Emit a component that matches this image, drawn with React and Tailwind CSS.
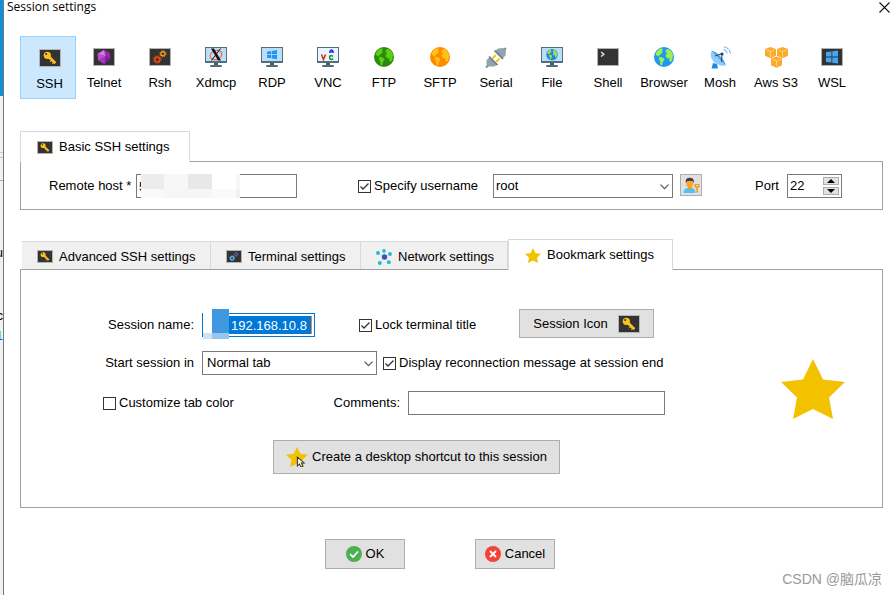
import React from "react";

/* ---------- icons ---------- */

function TermFrame({ width = 22, height = 18, children }) {
  return (
    <svg width={width} height={height} viewBox="1 1 20 16" preserveAspectRatio="none" aria-hidden="true" className="shrink-0 border border-[#b4b4b4] bg-[#333333]">
      {children}
    </svg>
  );
}

function KeyIcon({ width, height }) {
  return (
    <TermFrame width={width} height={height}>
      <path d="M9.5 7.5 L16.300 14.300" stroke="#fbc11c" strokeWidth="3" />
      <path d="M12 12 L10.800 13.200 M14 14 L13 15" stroke="#e0a010" strokeWidth="1" />
      <circle cx="8.300" cy="6.300" r="3.600" fill="#fbc11c" />
      <circle cx="7.200" cy="5" r="1" fill="#333" />
    </TermFrame>
  );
}

function GemIcon() {
  return (
    <TermFrame>
      <path d="M11 2 L16.500 4.500 L17.500 10 L11.500 16 L5.500 12.500 L4.500 6 Z" fill="#9c27b0" />
      <path d="M11 2 L12.500 8 L4.500 6 Z" fill="#d07be4" />
      <path d="M4.500 6 L12.500 8 L5.500 12.500 Z" fill="#b64fd0" />
      <path d="M12.500 8 L17.500 10 L11.500 16 Z" fill="#7b1fa2" />
      <path d="M5.500 12.500 L12.500 8 L11.500 16 Z" fill="#a338bd" />
    </TermFrame>
  );
}

function GearsIcon({ width, height, big, small }) {
  return (
    <TermFrame width={width} height={height}>
      <circle cx="8.300" cy="11.500" r="2.400" fill="none" stroke={big} strokeWidth="1.700" />
      <circle cx="8.300" cy="11.500" r="3.600" fill="none" stroke={big} strokeWidth="1.200" strokeDasharray="1.500 1.330" />
      <circle cx="14" cy="5.800" r="2" fill="none" stroke={small} strokeWidth="1.400" />
      <circle cx="14" cy="5.800" r="3.100" fill="none" stroke={small} strokeWidth="1" strokeDasharray="1.250 1.185" />
    </TermFrame>
  );
}

function Monitor({ children, screen = "#bbdefb" }) {
  return (
    <svg width="22" height="20" viewBox="0 0 22 20" aria-hidden="true" className="shrink-0">
      <rect width="22" height="16" fill="#546e7a" />
      <rect x="1" y="1" width="20" height="13" fill={screen} />
      <rect x="9" y="16" width="4" height="2" fill="#455a64" />
      <rect x="5" y="18" width="12" height="2" rx="1" fill="#546e7a" />
      {children}
    </svg>
  );
}

function XdmcpIcon() {
  return (
    <Monitor>
      <ellipse cx="11" cy="8" rx="6" ry="4.500" fill="none" stroke="#ef6c3a" strokeWidth="1.200" transform="rotate(-20 11 8)" />
      <path d="M6 1.500 H9 L16 13.500 H13 Z" fill="#111" />
      <path d="M15.500 1.500 L6.500 13.500" stroke="#111" strokeWidth="1" />
    </Monitor>
  );
}

function WindowsPanes() {
  return (
    <g fill="#2196f3">
      <path d="M6 4.700 L10.300 4 V7.200 H6 Z" />
      <path d="M11 3.900 L16 3 V7.200 H11 Z" />
      <path d="M6 8 H10.300 V11.300 L6 10.700 Z" />
      <path d="M11 8 H16 V12.200 L11 11.400 Z" />
    </g>
  );
}

function VncIcon() {
  return (
    <Monitor screen="#e8f4ff">
      <path d="M4.500 7.500 L6.500 12.500 L8.500 7.500" fill="none" stroke="#e02020" strokeWidth="1.500" />
      <path d="M12.800 6 V4.500 Q14.500 1.500 16.200 4.500 V6 M12.800 4.800 H16.200" fill="none" stroke="#2424f0" strokeWidth="1.300" />
      <path d="M16.200 9.300 Q12.600 7.500 12.600 10.500 Q12.600 13.500 16.200 11.800" fill="none" stroke="#159015" strokeWidth="1.500" />
    </Monitor>
  );
}

function Land({ fill }) {
  return (
    <g fill={fill}>
      <path d="M2.500 5 Q4.500 1.600 7.500 1.300 L9 2.500 L7.800 4 L9 5 L7 6.800 L6 8.300 L4.600 8 L5.300 9.500 L3.500 9 L1.600 7.500 Z" />
      <path d="M5.500 9.800 L8.500 10.500 L10.500 12.300 L9 15 L7.800 18.500 L6.200 17.500 L6.300 14.500 L4.800 12.200 Z" />
      <path d="M11.500 3 L14.500 2 Q18 4 19 8 L18.300 12.500 L16.800 15 L15.300 14 L15.500 11.500 L12.800 11 L11.500 8.500 L13 6.500 L11.800 5 Z" />
    </g>
  );
}

function Globe({ sea, land }) {
  return (
    <svg width="20" height="20" viewBox="0 0 20 20" aria-hidden="true" className="shrink-0">
      <circle cx="10" cy="10" r="10" fill={sea} />
      <Land fill={land} />
    </svg>
  );
}

function SerialIcon() {
  return (
    <svg width="22" height="21" viewBox="0 0 22 21" aria-hidden="true" className="shrink-0">
      <path d="M1 20.500 L4 17.500 M18 4 L21 1" stroke="#78909c" strokeWidth="2" />
      <path d="M1.500 13 L4.500 10.500 L12 18 L9 19.500 H3.500 L1.500 17.500 Z" fill="#90a4ae" />
      <path d="M10 4 L13 1.500 L18.500 1 L21 3.500 L20.500 8.500 L17.500 11.500 Z" fill="#90a4ae" />
      <path d="M4 9.500 L12.500 18 M9.500 3.500 L18 12" stroke="#607d8b" strokeWidth="1.700" />
      <path d="M7.500 11.500 L11 8 M11 15 L14.500 11.500" stroke="#ffc107" strokeWidth="1.800" />
    </svg>
  );
}

function FileIcon() {
  return (
    <Monitor>
      <circle cx="11" cy="7.600" r="5.700" fill="#1e88e5" />
      <g transform="translate(5.300 1.900) scale(0.570)">
        <Land fill="#a5e03c" />
      </g>
    </Monitor>
  );
}

function ShellIcon() {
  return (
    <TermFrame>
      <path d="M4 4 L7 6.300 L4 8.500" fill="none" stroke="#f0f0f0" strokeWidth="1.200" />
    </TermFrame>
  );
}

function MoshIcon() {
  return (
    <svg width="22" height="23" viewBox="0 0 22 23" aria-hidden="true" className="shrink-0">
      <path d="M4 17 L2.500 22.500 H9 L8 18 Z" fill="#1e88e5" />
      <path d="M2.500 5 Q0.500 11 4.500 15.500 Q9.500 20.500 16.500 19.500 Z" fill="#90caf9" />
      <path d="M2.500 5 L16.500 19.500 Q17 16 11 10 Q5.500 4.500 2.500 5 Z" fill="#42a5f5" />
      <path d="M6 10 L13 7.700 L12.500 16" fill="none" stroke="#37474f" strokeWidth="1" />
      <circle cx="13" cy="8" r="1.600" fill="#0d47a1" />
      <path d="M14.500 3.500 Q18 4.500 18.500 8 M15 0.700 Q20.500 2 21.500 7.500" fill="none" stroke="#64b5f6" strokeWidth="1.100" strokeDasharray="5 1" />
    </svg>
  );
}

function Cube({ x, y }) {
  return (
    <g transform={`translate(${x} ${y})`}>
      <path d="M5.500 0 L11 2 V8.800 L5.500 11.300 L0 8.800 V2 Z" fill="#fbab2c" />
      <path d="M1.500 3 L5.500 4.500 L9.500 3 M5.500 4.500 V10" fill="none" stroke="#ffe3ad" strokeWidth="0.700" />
    </g>
  );
}

function AwsIcon() {
  return (
    <svg width="23" height="21" viewBox="0 0 23 21" aria-hidden="true" className="shrink-0">
      <Cube x={0} y={0} />
      <Cube x={12} y={0} />
      <Cube x={6} y={9.5} />
    </svg>
  );
}

function WslIcon() {
  return (
    <TermFrame>
      <g fill="#42a5f5">
        <path d="M5 4 L10.500 3.400 V8.500 H5 Z" />
        <path d="M11.300 3.300 L17 2.500 V8.500 H11.300 Z" />
        <path d="M5 9.400 H10.500 V14.600 L5 14 Z" />
        <path d="M11.300 9.400 H17 V15.500 L11.300 14.700 Z" />
      </g>
    </TermFrame>
  );
}

function NetworkIcon() {
  return (
    <svg width="16" height="16" viewBox="0 0 16 16" aria-hidden="true" className="shrink-0">
      <path d="M8.500 8 L2 4 M8.500 8 L8 2 M8.500 8 L14 5 M8.500 8 L13 13 M8.500 8 L3.500 14" stroke="#b6dfe8" strokeWidth="0.700" />
      <circle cx="8.500" cy="8" r="2.700" fill="#3f51b5" />
      <g fill="#16bcd4">
        <circle cx="2" cy="4" r="1.900" />
        <circle cx="8" cy="1.900" r="1.800" />
        <circle cx="14" cy="5" r="1.900" />
        <circle cx="12.800" cy="13.200" r="1.900" />
        <circle cx="3.800" cy="14" r="1.900" />
      </g>
    </svg>
  );
}

function Star({ width, height, className = "", children }) {
  return (
    <svg width={width} height={height} viewBox="0 0 64 60" preserveAspectRatio="none" aria-hidden="true" className={`shrink-0 ${className}`}>
      <path d="M32 0 L42 20.500 L64 23 L48 38.500 L52 60 L32 50 L12 60 L16 38.500 L0 23 L22 20.500 Z" fill="#f2c100" />
      {children}
    </svg>
  );
}

function UserKeyIcon() {
  return (
    <svg width="17" height="17" viewBox="0 0 17 17" aria-hidden="true">
      <path d="M0.500 16 Q0.500 11.500 4.500 11 H9 Q12.500 11.500 12.500 16 Z" fill="#4fc3f7" />
      <path d="M5 9 H8.500 V11.500 L6.700 13 L5 11.500 Z" fill="#ff9800" />
      <ellipse cx="6.800" cy="6.500" rx="3.600" ry="4" fill="#ffa726" />
      <path d="M2.800 6 Q2 0.800 6.800 0.800 Q11.600 0.800 10.800 6 L9.500 4 H4.500 Z" fill="#424242" />
      <path d="M11.500 7 H16.500 V10.500 H14.900 V15.500 H13.300 V10.500 H11.500 Z" fill="#f59a1c" />
      <rect x="13.300" y="8" width="1.500" height="1" fill="#fff" />
    </svg>
  );
}

/* ---------- controls ---------- */

function Check({ label, checked = false }) {
  return (
    <label className="flex items-center gap-[3px] whitespace-nowrap">
      <span className="relative h-[13px] w-[13px] shrink-0">
        <input type="checkbox" defaultChecked={checked} className="peer block h-[13px] w-[13px] appearance-none border border-[#333] bg-white" />
        <svg viewBox="0 0 13 13" aria-hidden="true" className="pointer-events-none absolute inset-0 hidden peer-checked:block">
          <path d="M2.500 6.500 L5 9 L10.500 3.500" fill="none" stroke="#333" strokeWidth="1.300" />
        </svg>
      </span>
      {label}
    </label>
  );
}

function Select({ id, label, value, className, pad }) {
  return (
    <span className={`relative block h-6 ${className}`}>
      <select id={id} aria-label={label} defaultValue={value} className={`h-6 w-full appearance-none border border-[#7a7a7a] bg-white ${pad}`}>
        <option>{value}</option>
      </select>
      <svg width="9" height="6" viewBox="0 0 9 6" aria-hidden="true" className="pointer-events-none absolute top-[10px] right-1">
        <path d="M0.500 0.700 L4.500 4.700 L8.500 0.700" fill="none" stroke="#555" strokeWidth="1.200" />
      </svg>
    </span>
  );
}

const button = "flex items-center justify-center border border-[#adadad] bg-[#e1e1e1] whitespace-nowrap";

/* ---------- sections ---------- */

const sessions = [
  { name: "SSH", icon: <KeyIcon /> },
  { name: "Telnet", icon: <GemIcon /> },
  { name: "Rsh", icon: <GearsIcon big="#e0490c" small="#f29a18" /> },
  { name: "Xdmcp", icon: <XdmcpIcon /> },
  { name: "RDP", icon: <Monitor><WindowsPanes /></Monitor> },
  { name: "VNC", icon: <VncIcon /> },
  { name: "FTP", icon: <Globe sea="#2b8a0e" land="#5ad010" /> },
  { name: "SFTP", icon: <Globe sea="#ff8a00" land="#ffc414" /> },
  { name: "Serial", icon: <SerialIcon /> },
  { name: "File", icon: <FileIcon /> },
  { name: "Shell", icon: <ShellIcon /> },
  { name: "Browser", icon: <Globe sea="#2196f3" land="#9cf04c" /> },
  { name: "Mosh", icon: <MoshIcon /> },
  { name: "Aws S3", icon: <AwsIcon /> },
  { name: "WSL", icon: <WslIcon /> },
];

function SessionTypes() {
  return (
    <nav className="mr-9 ml-4 grid h-[63px] grid-cols-[repeat(15,minmax(0,1fr))]">
      {sessions.map((s, i) => (
        <button
          key={s.name}
          type="button"
          className={
            i === 0
              ? "flex flex-col items-center border border-[#99d1ff] bg-[#cce8ff] pt-[11px] pl-[3px] whitespace-nowrap"
              : "flex flex-col items-center border border-transparent pt-[10px] whitespace-nowrap"
          }
        >
          <span className="flex h-5 items-center">{s.icon}</span>
          <span className="mt-2">{s.name}</span>
        </button>
      ))}
    </nav>
  );
}

function BasicSettings() {
  return (
    <section className="mt-8 mr-[13px] ml-4">
      <div className="flex">
        <button type="button" className="relative -mb-px flex h-[31px] w-[170px] items-center gap-[6px] border border-b-0 border-[#d9d9d9] bg-white pl-4 whitespace-nowrap">
          <KeyIcon width={16} height={13} />
          Basic SSH settings
        </button>
      </div>
      <div className="flex h-[49px] border border-[#a0a0a0] pt-3 pl-7">
        <label htmlFor="host" className="w-[87px] leading-6 whitespace-nowrap">Remote host *</label>
        <div className="relative h-6 w-[161px]">
          <input id="host" defaultValue="5" className="h-6 w-full border border-[#7a7a7a] px-[2px]" />
          <div className="absolute top-0 left-[5px] grid w-[99px] grid-cols-[23px_24px_24px_24px_4px] grid-rows-[15px_9px]">
            <i className="bg-[#ececec]" /><i className="bg-[#f7f7f7]" /><i className="bg-[#e8e8e8]" /><i className="bg-white" /><i className="bg-[#f7f7f7]" />
            <i className="bg-[#f9f9f9]" /><i className="bg-[#f6f6f6]" /><i className="bg-[#f6f6f6]" /><i className="bg-[#fafafa]" /><i className="bg-[#f1f1f1]" />
          </div>
        </div>
        <div className="ml-[61px] flex h-6 w-[135px] items-center">
          <Check label="Specify username" checked />
        </div>
        <Select label="Username" value="root" className="w-[180px]" pad="pl-[2px]" />
        <button type="button" aria-label="Manage users" className={`${button} ml-[7px] h-[22px] w-[22px]`}>
          <UserKeyIcon />
        </button>
        <label htmlFor="port" className="ml-[53px] w-8 leading-6">Port</label>
        <div className="flex h-6 w-[55px] items-center border border-[#7a7a7a] pr-[2px]">
          <input id="port" defaultValue="22" className="w-0 min-w-0 flex-1 px-[2px]" />
          <div className="flex flex-col gap-[2px]">
            <button type="button" aria-label="Increase port" className={`${button} h-2 w-4`}>
              <svg width="8" height="4" viewBox="0 0 8 4" aria-hidden="true"><path d="M4 0 L8 4 H0 Z" fill="#000" /></svg>
            </button>
            <button type="button" aria-label="Decrease port" className={`${button} h-2 w-4`}>
              <svg width="8" height="4" viewBox="0 0 8 4" aria-hidden="true"><path d="M0 0 H8 L4 4 Z" fill="#000" /></svg>
            </button>
          </div>
        </div>
      </div>
    </section>
  );
}

function BookmarkSettings() {
  const tab = "flex h-7 items-center gap-[6px] border-t border-r border-[#d9d9d9] bg-[#f0f0f0] pl-[15px] pt-[2px] whitespace-nowrap";
  return (
    <section className="mt-[29px] mr-[13px] ml-4">
      <div className="flex items-end pl-[2px]">
        <button type="button" className={`${tab} w-[189px]`}><KeyIcon width={16} height={13} />Advanced SSH settings</button>
        <button type="button" className={`${tab} w-[150px]`}><GearsIcon width={16} height={13} big="#64b5f6" small="#5c6bc0" />Terminal settings</button>
        <button type="button" className={`${tab} w-[147px]`}><NetworkIcon />Network settings</button>
        <button type="button" className="relative -mb-px flex h-[31px] w-[165px] items-center gap-[6px] border border-b-0 border-[#d9d9d9] bg-white pl-4 whitespace-nowrap">
          <Star width={16} height={15} />
          Bookmark settings
        </button>
      </div>
      <div className="flex items-center justify-between border border-[#a0a0a0] pt-[39px] pr-[37px] pb-[33px] pl-[82px]">
        <div className="w-[562px]">
          <div className="flex h-8 items-center">
            <label htmlFor="session-name" className="w-[99px] pr-2 text-right whitespace-nowrap">Session name:</label>
            <div className="relative flex h-6 w-[113px] border border-[#0078d7] py-[2px] pr-[2px] pl-[26px]">
              <input id="session-name" defaultValue="192.168.10.8" className="h-[18px] w-full border-r border-[#f0883a] bg-[#0078d7] pl-[2px] text-white" />
              <div className="absolute -top-[5px] left-0 grid grid-cols-[9px_17px] grid-rows-[24px_6px]">
                <i className="bg-white" /><i className="bg-[#3f98e0]" />
                <i className="bg-[#cfe3f7]" /><i className="bg-[#97c6ef]" />
              </div>
            </div>
            <div className="ml-11 w-[160px]"><Check label="Lock terminal title" checked /></div>
            <button type="button" className={`${button} h-[29px] w-[135px] gap-[10px] self-start`}>
              Session Icon
              <KeyIcon width={22} height={18} />
            </button>
          </div>
          <div className="mt-[10px] flex items-center">
            <label htmlFor="start-in" className="w-[99px] pr-2 text-right whitespace-nowrap">Start session in</label>
            <Select id="start-in" value="Normal tab" className="mr-[6px] w-[175px]" pad="pl-1" />
            <Check label="Display reconnection message at session end" checked />
          </div>
          <div className="mt-4 flex items-center">
            <Check label="Customize tab color" />
            <label htmlFor="comments" className="ml-auto pr-2">Comments:</label>
            <input id="comments" className="h-6 w-[257px] border border-[#7a7a7a] px-1" />
          </div>
          <button type="button" className={`${button} mt-[25px] ml-[170px] h-[34px] w-[287px] gap-[4px]`}>
            <Star width={22} height={20}>
              <path d="M33 30 V57 L39 51 L44 61 L49 58 L45 48 H53 Z" fill="#f0f0e8" stroke="#333" strokeWidth="3" />
            </Star>
            Create a desktop shortcut to this session
          </button>
        </div>
        <Star width={64} height={60} className="mb-[6px]" />
      </div>
    </section>
  );
}

export default function App() {
  return (
    <div className="relative flex min-h-screen overflow-hidden bg-white font-['Liberation_Sans',Arial,sans-serif] text-[13px] leading-4 text-black">
      {/* Edge of the window behind the dialog */}
      <div className="flex w-1 shrink-0 flex-col overflow-hidden border-r border-[#777] bg-[#f0f0f0]">
        <div className="h-24 shrink-0 bg-[#0a93dc]" />
        <div className="mt-14 h-[6px] shrink-0 border-y border-[#c8c8c8]" />
        <div className="mt-[22px] h-px shrink-0 bg-[#b0b0b0]" />
        <span className="mt-16 flex shrink-0 justify-end">tu</span>
        <span className="mt-[47px] flex shrink-0 justify-end">c</span>
        <span className="mt-1 flex shrink-0 justify-end text-[#0a66c8]">1</span>
      </div>

      <main className="min-w-0 flex-1">
        <header className="mb-[22px] flex h-[14px] items-center justify-between pr-[6px] pl-[3px]">
          <h1 className="font-['Open_Sans','Noto_Sans',sans-serif] text-xs leading-[14px]">Session settings</h1>
          <button type="button" aria-label="Close">
            <svg width="11" height="11" viewBox="0 0 11 11" aria-hidden="true">
              <path d="M0.500 0.500 L10.500 10.500 M10.500 0.500 L0.500 10.500" stroke="#111" strokeWidth="1.100" />
            </svg>
          </button>
        </header>
        <SessionTypes />
        <BasicSettings />
        <BookmarkSettings />
        <footer className="mt-[31px] ml-[321px] flex gap-[70px]">
          <button type="button" className={`${button} h-[30px] w-20 gap-1`}>
            <svg width="16" height="16" viewBox="0 0 16 16" aria-hidden="true">
              <circle cx="8" cy="8" r="8" fill="#4caf50" />
              <path d="M4 8.200 L7 11 L12 5.500" fill="none" stroke="#fff" strokeWidth="1.800" />
            </svg>
            OK
          </button>
          <button type="button" className={`${button} h-[30px] w-20 gap-1`}>
            <svg width="16" height="16" viewBox="0 0 16 16" aria-hidden="true">
              <circle cx="8" cy="8" r="8" fill="#f44336" />
              <path d="M5 5 L11 11 M11 5 L5 11" stroke="#fff" strokeWidth="1.900" />
            </svg>
            Cancel
          </button>
        </footer>
      </main>

      <p className="absolute right-[14px] bottom-2 font-['Liberation_Sans','Noto_Sans_CJK_SC',sans-serif] text-sm leading-4 text-[#999]">CSDN @脑瓜凉</p>
    </div>
  );
}
